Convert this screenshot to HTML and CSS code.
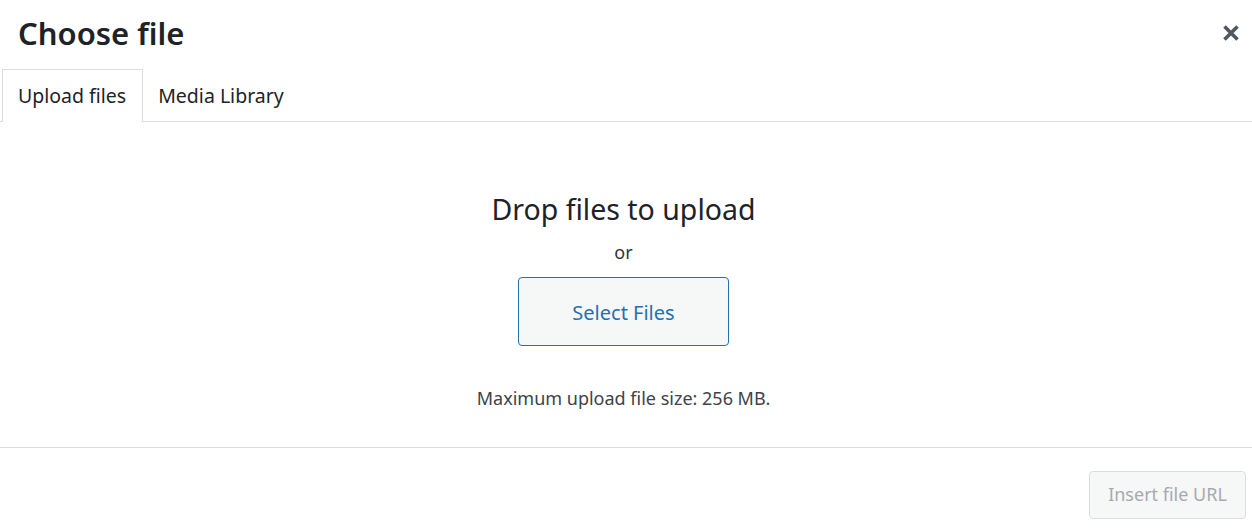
FILE: index.html
```html
<!DOCTYPE html>
<html>
<head>
<meta charset="utf-8">
<link rel="stylesheet" href="styles.css">
</head>
<body>
<div class="modal">
  <div class="header">
    <h1 class="title">Choose file</h1>
    <button class="close" aria-label="Close">
      <svg width="18" height="18" viewBox="0 0 18 18"><path d="M2.5 2.5L15.5 15.5M15.5 2.5L2.5 15.5" stroke="#50575e" stroke-width="3.6" stroke-linecap="butt"/></svg>
    </button>
  </div>
  <div class="tabs">
    <div class="tab active">Upload files</div>
    <div class="tab">Media Library</div>
  </div>
  <div class="content">
    <div class="drop">Drop files to upload</div>
    <div class="or">or</div>
    <button class="select">Select Files</button>
    <div class="max">Maximum upload file size: 256 MB.</div>
  </div>
  <div class="footer">
    <button class="insert" disabled>Insert file URL</button>
  </div>
</div>
</body>
</html>
```
FILE: styles.css
```css
html, body {
  margin: 0;
  padding: 0;
  background: #fff;
}
body {
  font-family: "Noto Sans", "Open Sans", sans-serif;
  color: #1e1e1e;
  width: 1252px;
  height: 532px;
  overflow: hidden;
}
.modal {
  display: flex;
  flex-direction: column;
  height: 532px;
}
.header {
  height: 69px;
  display: flex;
  align-items: center;
  justify-content: space-between;
  padding: 0 12px 0 18px;
  box-sizing: border-box;
}
.title {
  margin: 0;
  font-size: 31px;
  font-weight: 600;
  color: #1d2327;
  line-height: 1;
  padding-bottom: 2px;
}
.close {
  border: 0;
  background: none;
  padding: 0;
  width: 18px;
  height: 18px;
  margin-bottom: 3px;
}
.close svg { display: block; }
.tabs {
  display: flex;
  border-bottom: 1px solid #dcdcde;
  padding-left: 2px;
  height: 52px;
}
.tab {
  font-size: 19.5px;
  color: #1d2327;
  padding: 0 14px;
  display: flex;
  align-items: center;
  height: 53px;
  box-sizing: border-box;
  border: 1px solid transparent;
  border-bottom: 0;
  padding-bottom: 2px;
}
.tab.active {
  border-color: #dcdcde;
  background: #fff;
  padding: 0 16px 2px 15px;
}
.content {
  height: 325px;
  border-bottom: 1px solid #dcdcde;
  display: flex;
  flex-direction: column;
  align-items: center;
  padding-right: 5px;
}
.drop {
  margin-top: 68px;
  font-size: 28.5px;
  color: #1d2327;
  line-height: 38px;
}
.or {
  font-size: 18px;
  color: #2c3338;
  line-height: 24px;
  margin-top: 12px;
}
.select {
  margin-top: 13px;
  width: 211px;
  height: 69px;
  border: 1px solid #2271b1;
  border-radius: 4px;
  background: #f6f7f7;
  color: #2271b1;
  font-family: inherit;
  font-size: 20px;
  padding: 1px 0 0;
}
.max {
  margin-top: 40px;
  font-size: 18px;
  color: #3c434a;
  line-height: 24px;
}
.footer {
  display: flex;
  justify-content: flex-end;
  padding: 23px 6px 0 0;
}
.insert {
  width: 157px;
  height: 48px;
  border: 1px solid #dcdcde;
  border-radius: 4px;
  background: #f6f7f7;
  color: #a7aaad;
  font-family: inherit;
  font-size: 18px;
  padding: 0 0 2px;
}
```
